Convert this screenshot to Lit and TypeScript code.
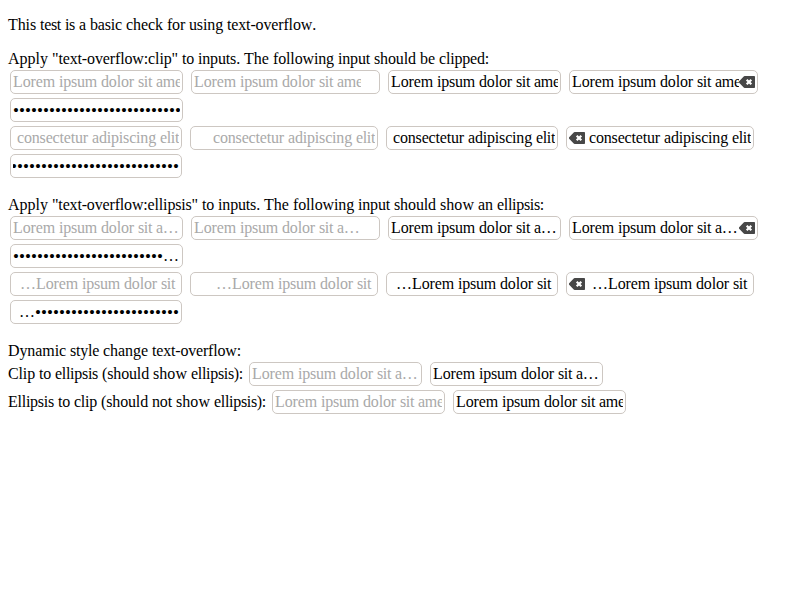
import { LitElement, html, css, svg, nothing } from "lit";
import { customElement, property } from "lit/decorators.js";
import { classMap } from "lit/directives/class-map.js";
import { styleMap } from "lit/directives/style-map.js";

const LOREM = "Lorem ipsum dolor sit amet";
const TAIL = "consectetur adipiscing elit";
const HEAD = "…Lorem ipsum dolor sit ";
const dots = (n: number) => "•".repeat(n);

// Advance widths of the serif face, in thousandths of an em.
const ADVANCES: [string, number][] = [
  ["iltj:/", 278], [".,", 250], ["rf()-", 333], ["s", 389], ["\"", 408],
  ["ace", 444], ["z", 444], ["mM", 778], ["w", 722], ["ADwXY", 722],
  ["C", 667], ["TEL", 611], ["…", 1000],
];
const FONT_SIZE = 16;

function advance(ch: string): number {
  const hit = ADVANCES.find(([set]) => set.includes(ch));
  return ((hit ? hit[1] : 500) * FONT_SIZE) / 1000;
}

// Sets each word on whole-pixel advances by spreading the rounding over its letters.
function snapped(text: string) {
  return text.split(/(\s+|…)/).filter(Boolean).map((word) => {
    if (word.trim() === "" || word === "…") return word;
    const letters = [...word];
    const diff = letters.reduce((sum, ch) => sum + Math.round(advance(ch)) - advance(ch), 0);
    const spacing = `${(diff / letters.length).toFixed(3)}px`;
    return html`<span style=${styleMap({ letterSpacing: spacing })}>${word}</span>`;
  });
}

@customElement("text-field")
export class TextField extends LitElement {
  @property() text = "";
  @property({ type: Boolean }) hint = false;
  @property({ type: Boolean }) ellipsis = false;
  @property({ type: Boolean }) rtl = false;
  @property({ type: Boolean }) search = false;
  @property({ type: Boolean }) clearable = false;
  @property({ type: Boolean }) password = false;

  static styles = css`
    :host { display: block; margin: 2px; }
    .box {
      display: flex; align-items: center; box-sizing: border-box; height: 24px;
      border: 1px solid #cdc7c2; border-radius: 5px; padding: 2px; background: #fff;
    }
    .text {
      display: flex; width: 167px; height: 18px; line-height: 18px;
      overflow: hidden; white-space: pre; color: #000;
    }
    .line { flex: none; }
    .ellipsis .text { display: block; text-overflow: ellipsis; }
    .hint .text { color: #a9a9a9; }
    .rtl { flex-direction: row-reverse; }
    .rtl .text { width: 166px; justify-content: flex-end; }
    .dots { font-size: 17px; line-height: 0; letter-spacing: 0.05px; vertical-align: -1px; }
    .slot { flex: none; width: 16px; height: 16px; }
    svg { display: block; }
  `;

  render() {
    const cls = classMap({
      box: true, hint: this.hint, ellipsis: this.ellipsis, rtl: this.rtl,
    });
    const m = this.password ? /^(…?)(•*)(…?)$/.exec(this.text) : null;
    const body = m
      ? html`${m[1]}<span class="dots">${m[2]}</span>${m[3]}`
      : snapped(this.text);
    return html`<div class=${cls}>
      <div class="text"><span class="line">${body}</span></div>
      ${this.search ? html`<div class="slot">${this.clearable ? this.icon() : nothing}</div>` : nothing}
    </div>`;
  }

  private icon() {
    return html`<svg width="16" height="16" viewBox="0 0 16 16">${svg`
      <path fill="#474747" d="M5.6 2H15.2a.8.8 0 0 1 .8.8v10.4a.8.8 0 0 1-.8.8H5.6q-.5 0-.9-.4L.4 9a1.4 1.4 0 0 1 0-2L4.7 2.4q.4-.4.9-.4z"/>
      <path stroke="#fff" stroke-width="2.2" d="M7.7 5.7l4.6 4.6M12.3 5.7l-4.6 4.6"/>`}</svg>`;
  }
}

@customElement("app-root")
export class AppRoot extends LitElement {
  static styles = css`
    :host {
      display: block; padding: 16px 8px 0;
      font: 16px/18px "Liberation Serif", "Times New Roman", serif;
      font-kerning: none; color: #000;
    }
    p { margin: 0; }
    section { margin-top: 16px; }
    .row { display: flex; align-items: center; gap: 4px; height: 28px; }
  `;

  private group(ellipsis: boolean) {
    const rtlText = ellipsis ? HEAD : TAIL;
    return html`
      <div class="row">
        <text-field .text=${LOREM} hint ?ellipsis=${ellipsis}></text-field>
        <text-field .text=${LOREM} hint search ?ellipsis=${ellipsis}></text-field>
        <text-field .text=${LOREM} ?ellipsis=${ellipsis}></text-field>
        <text-field .text=${LOREM} search clearable ?ellipsis=${ellipsis}></text-field>
      </div>
      <div class="row">
        <text-field password .text=${ellipsis ? dots(25) + "…" : dots(28)}></text-field>
      </div>
      <div class="row">
        <text-field rtl .text=${rtlText} hint></text-field>
        <text-field rtl .text=${rtlText} hint search></text-field>
        <text-field rtl .text=${rtlText}></text-field>
        <text-field rtl .text=${rtlText} search clearable></text-field>
      </div>
      <div class="row">
        <text-field rtl password .text=${ellipsis ? "…" + dots(24) : dots(28)}></text-field>
      </div>`;
  }

  render() {
    return html`
      <p>${snapped("This test is a basic check for using text-overflow.")}</p>
      <section>
        <p>${snapped('Apply "text-overflow:clip" to inputs. The following input should be clipped:')}</p>
        ${this.group(false)}
      </section>
      <section>
        <p>${snapped('Apply "text-overflow:ellipsis" to inputs. The following input should show an ellipsis:')}</p>
        ${this.group(true)}
      </section>
      <section>
        <p>${snapped("Dynamic style change text-overflow:")}</p>
        <div class="row">
          <span>${snapped("Clip to ellipsis (should show ellipsis):")}</span>
          <text-field .text=${LOREM} hint ellipsis></text-field>
          <text-field .text=${LOREM} ellipsis></text-field>
        </div>
        <div class="row">
          <span>${snapped("Ellipsis to clip (should not show ellipsis):")}</span>
          <text-field .text=${LOREM} hint></text-field>
          <text-field .text=${LOREM}></text-field>
        </div>
      </section>`;
  }
}
